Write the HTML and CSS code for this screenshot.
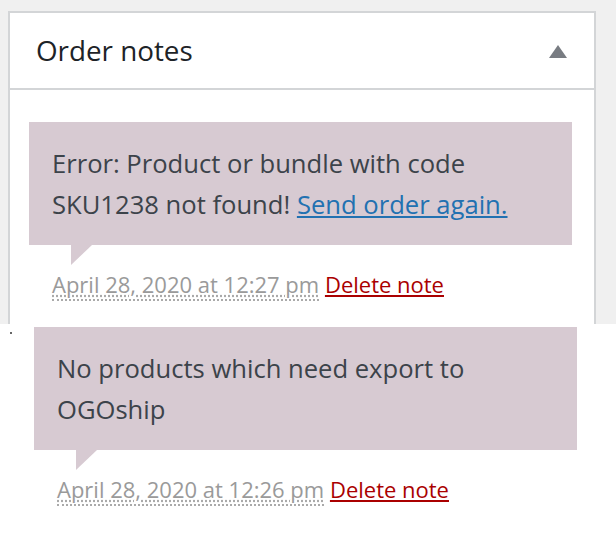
FILE: index.html
```html
<!DOCTYPE html>
<html>
<head>
<meta charset="utf-8">
<link rel="stylesheet" href="styles.css">
</head>
<body>
<div class="shot-top">
  <div class="postbox">
    <div class="postbox-header">
      <h2 class="hndle">Order notes</h2>
      <span class="toggle-indicator" aria-hidden="true"></span>
    </div>
    <div class="inside">
      <div class="note">
        <div class="note-content">
          <p>Error: Product or bundle with code SKU1238 not found! <a href="#" class="link">Send order again.</a></p>
        </div>
        <p class="meta"><abbr class="exact-date" title="2020-04-28 12:27:00">April 28, 2020 at 12:27 pm</abbr> <a href="#" class="delete-note">Delete note</a></p>
      </div>
    </div>
  </div>
</div>
<div class="shot-bottom">
  <span class="speck"></span>
  <div class="note">
    <div class="note-content">
      <p>No products which need export to OGOship</p>
    </div>
    <p class="meta"><abbr class="exact-date" title="2020-04-28 12:26:00">April 28, 2020 at 12:26 pm</abbr> <a href="#" class="delete-note">Delete note</a></p>
  </div>
</div>
</body>
</html>
```

FILE: styles.css
```css
html, body {
  margin: 0;
  padding: 0;
}
body {
  background: #f0f0f0;
  font-family: "Open Sans", "Noto Sans", sans-serif;
  color: #3c434a;
}

.shot-top {
  height: 324px;
  box-sizing: border-box;
  padding: 11px 0 0 8px;
  overflow: hidden;
}

.postbox {
  width: 588px;
  box-sizing: border-box;
  min-height: 400px;
  background: #fff;
  border: 2px solid #d3d5d7;
}

.postbox-header {
  height: 75px;
  display: flex;
  align-items: center;
  justify-content: space-between;
  padding: 0 27px 0 26px;
  border-bottom: 2px solid #d3d5d7;
}

.hndle {
  margin: 0;
  font-size: 27.8px;
  font-weight: 500;
  color: #1d2327;
  line-height: 1.2;
}

.toggle-indicator {
  width: 0;
  height: 0;
  border-left: 9px solid transparent;
  border-right: 9px solid transparent;
  border-bottom: 13px solid #787c82;
  margin-top: 1px;
}

.inside {
  padding: 32px 22px 0 19px;
}

.note-content {
  position: relative;
  background: #d7cad2;
  padding: 21px 22px 20px 23px;
  font-size: 25.6px;
  line-height: 41px;
}

.note-content p {
  margin: 0;
}

.note-content::after {
  content: "";
  position: absolute;
  left: 42px;
  bottom: -20px;
  width: 0;
  height: 0;
  border-style: solid;
  border-width: 20px 21px 0 0;
  border-color: #d7cad2 transparent transparent transparent;
}

.link {
  color: #2271b1;
  text-decoration: underline;
}

.meta {
  margin: 24px 0 0;
  padding-left: 23px;
  font-size: 22px;
  line-height: 30px;
}

.exact-date {
  color: #9a9a9a;
  text-decoration: underline dotted #aaa;
  border-bottom: 2px dotted #aaa;
}

.delete-note {
  color: #a00;
  text-decoration: underline;
}

.shot-bottom {
  position: relative;
  height: 216px;
  box-sizing: border-box;
  background: #fff;
  padding: 3px 0 0 34px;
}

.shot-bottom .note {
  width: 543px;
}

.speck {
  position: absolute;
  left: 10px;
  top: 8px;
  width: 2px;
  height: 2px;
  background: #666;
}
```
